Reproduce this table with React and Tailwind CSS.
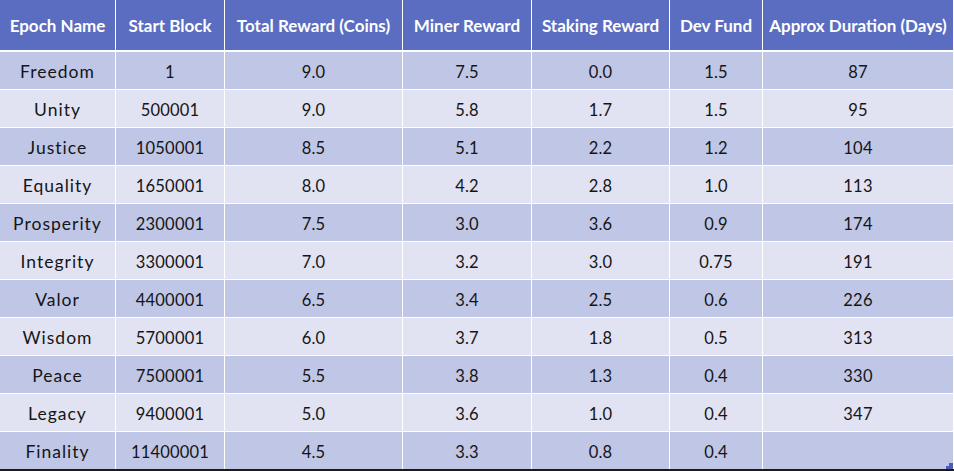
import React from "react";

const headers = [
  "Epoch Name",
  "Start Block",
  "Total Reward (Coins)",
  "Miner Reward",
  "Staking Reward",
  "Dev Fund",
  "Approx Duration (Days)",
];

const rows = [
  ["Freedom", "1", "9.0", "7.5", "0.0", "1.5", "87"],
  ["Unity", "500001", "9.0", "5.8", "1.7", "1.5", "95"],
  ["Justice", "1050001", "8.5", "5.1", "2.2", "1.2", "104"],
  ["Equality", "1650001", "8.0", "4.2", "2.8", "1.0", "113"],
  ["Prosperity", "2300001", "7.5", "3.0", "3.6", "0.9", "174"],
  ["Integrity", "3300001", "7.0", "3.2", "3.0", "0.75", "191"],
  ["Valor", "4400001", "6.5", "3.4", "2.5", "0.6", "226"],
  ["Wisdom", "5700001", "6.0", "3.7", "1.8", "0.5", "313"],
  ["Peace", "7500001", "5.5", "3.8", "1.3", "0.4", "330"],
  ["Legacy", "9400001", "5.0", "3.6", "1.0", "0.4", "347"],
  ["Finality", "11400001", "4.5", "3.3", "0.8", "0.4", ""],
];

const cols = "grid grid-cols-[115px_108px_177px_128px_137px_92px_1fr] gap-x-px";

export default function App() {
  return (
    <div
      className="relative w-[954px] h-[471px] bg-white overflow-hidden"
      style={{ fontFamily: "Lato, 'Open Sans', sans-serif" }}
    >
      <div className={`${cols} h-[50px] pr-px`}>
        {headers.map((h) => (
          <div
            key={h}
            className="bg-[#5A6DC1] text-white font-bold text-[17px] leading-none flex items-center justify-center whitespace-nowrap"
          >
            {h}
          </div>
        ))}
      </div>
      <div className="flex flex-col gap-y-px pt-[2px]">
        {rows.map((r, i) => (
          <div key={i} className={`${cols} h-[37px] pr-px`}>
            {r.map((c, j) => (
              <div
                key={j}
                className={`${
                  i % 2 === 0 ? "bg-[#BFC6E6]" : "bg-[#E1E2F2]"
                } text-[#151515] leading-none ${
                  j === 0 ? "text-[17.5px] tracking-[1px]" : "text-[16.5px] tracking-[0.2px]"
                } flex items-center justify-center whitespace-nowrap pt-[3px]`}
              >
                {c}
              </div>
            ))}
          </div>
        ))}
      </div>
      <div className="absolute left-0 right-0 bottom-0 h-[2px] bg-[#1a1a1a]" />
      <div className="absolute right-px bottom-[2px] w-[7px] h-[3px] bg-[#4B5BB8]" />
      <div className="absolute right-px bottom-[5px] w-[4px] h-[3px] bg-[#4B5BB8]" />
    </div>
  );
}
